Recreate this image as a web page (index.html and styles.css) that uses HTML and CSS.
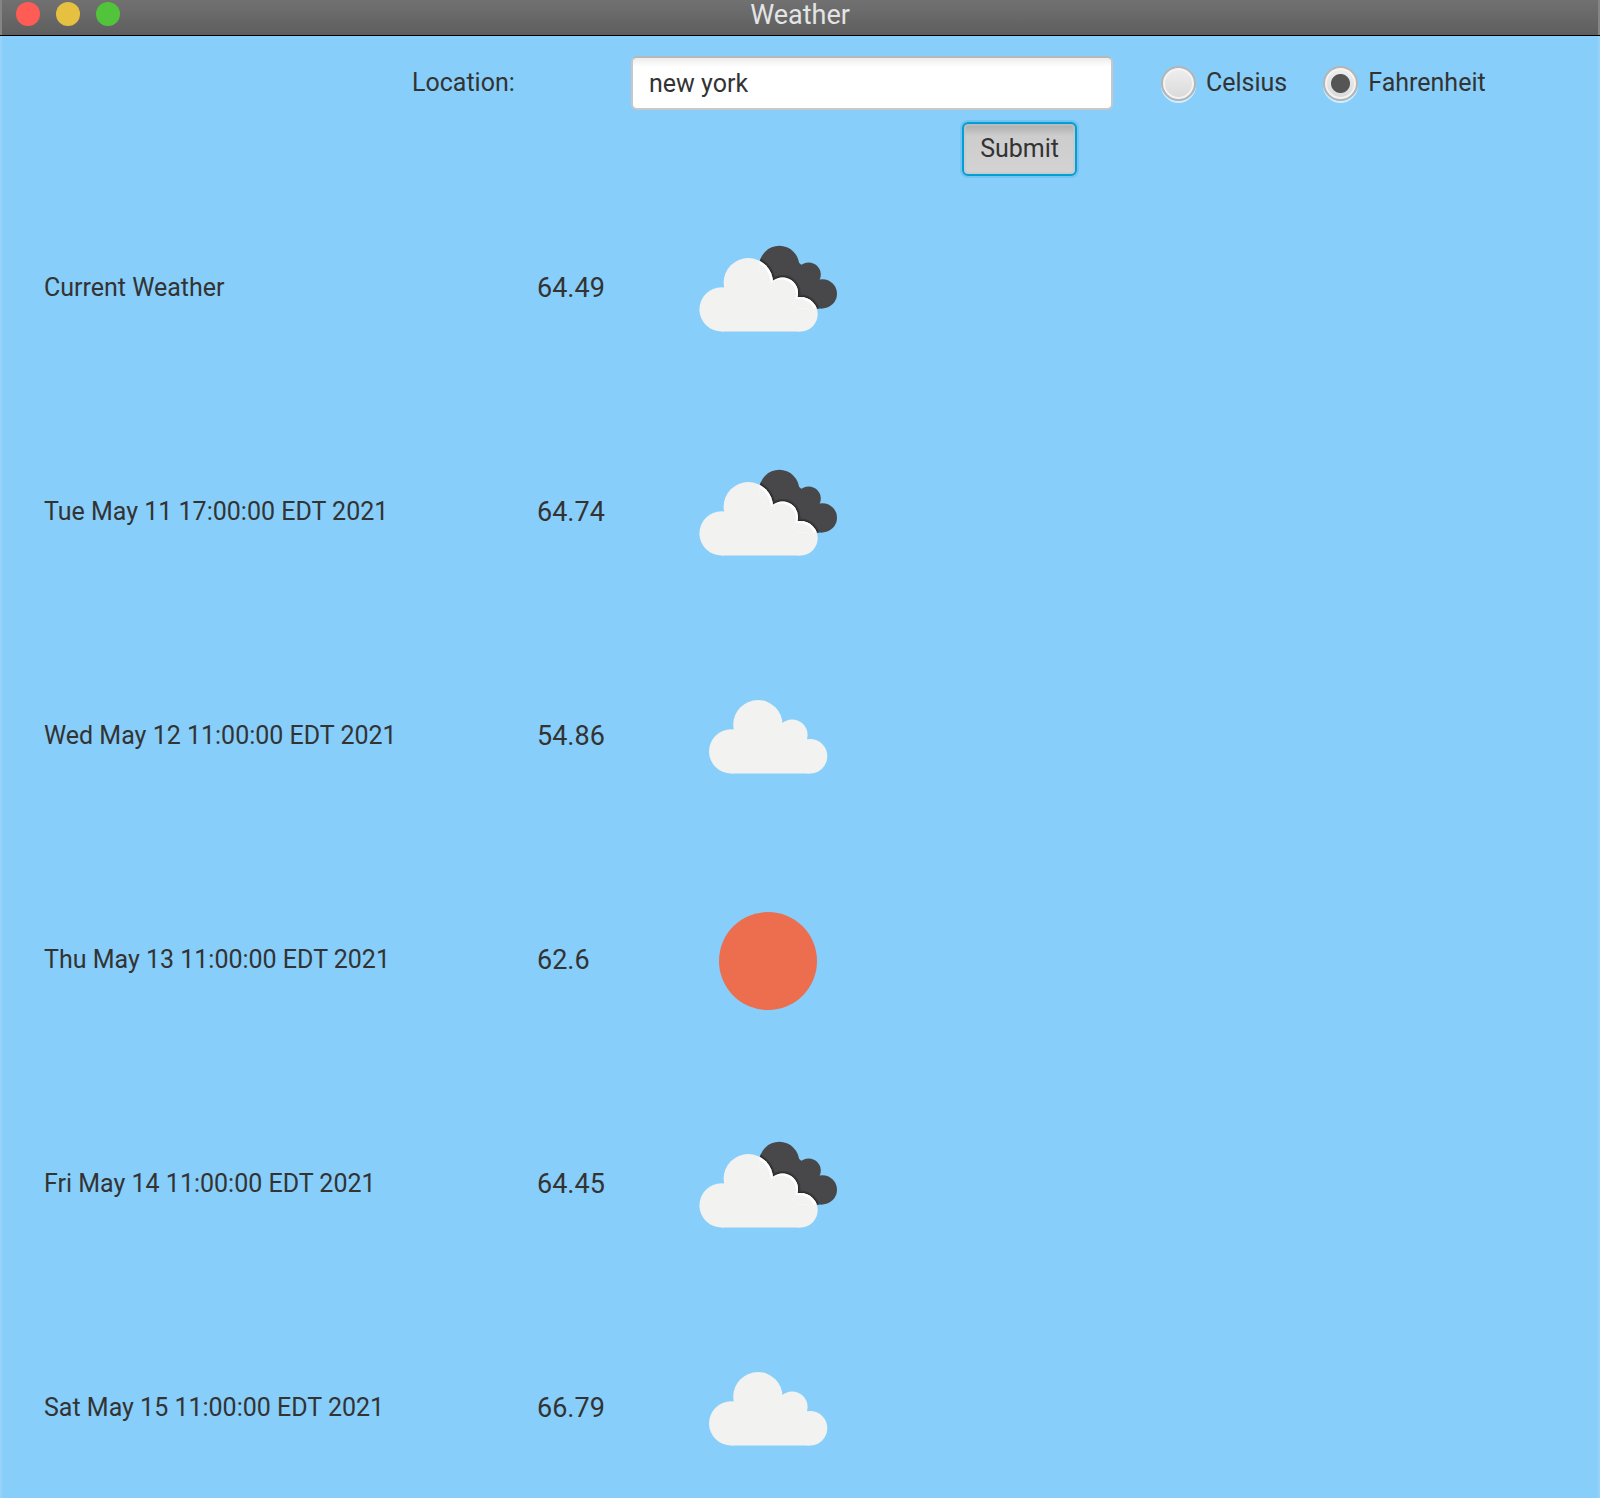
FILE: index.html
```html
<!DOCTYPE html>
<html lang="en">
<head>
<meta charset="utf-8">
<title>Weather</title>
<link rel="stylesheet" href="styles.css">
</head>
<body>
<svg class="symbols" aria-hidden="true">
  <defs>
    <g id="cloud-shape">
      <circle cx="53.5" cy="121.4" r="22.1"/>
      <circle cx="80.3" cy="94.7" r="24.7"/>
      <circle cx="114.6" cy="105" r="15.4"/>
      <circle cx="132.4" cy="126.2" r="17.3"/>
      <path d="M53.5 143.5V110L70 100H115L128 118L132.4 143.5Z"/>
    </g>
    <g id="dark-shape">
      <circle cx="111.3" cy="77.8" r="20"/>
      <circle cx="140.6" cy="86.6" r="12.2"/>
      <circle cx="154.4" cy="105.8" r="14.6"/>
      <path d="M100 90L128 72L150 92L154.4 120.4H130Z"/>
    </g>
    <clipPath id="dark-clip">
      <circle cx="111.3" cy="77.8" r="20"/>
      <circle cx="140.6" cy="86.6" r="12.2"/>
      <circle cx="154.4" cy="105.8" r="14.6"/>
      <path d="M100 90L128 72L150 92L154.4 120.4H130Z"/>
    </clipPath>
    <symbol id="cloud" viewBox="0 0 200 200">
      <use href="#cloud-shape" x="9.6" y="-6" fill="#f2f2f0"/>
    </symbol>
    <symbol id="broken-clouds" viewBox="0 0 200 200">
      <use href="#dark-shape" fill="#48484a"/>
      <g clip-path="url(#dark-clip)">
        <use href="#cloud-shape" fill="#38383a" stroke="#38383a" stroke-width="5"/>
        <use href="#cloud-shape" fill="#2a2a2b" stroke="#2a2a2b" stroke-width="2"/>
      </g>
      <use href="#cloud-shape" fill="#f2f2f0"/>
      <g clip-path="url(#dark-clip)">
        <use href="#cloud-shape" fill="#fff"/>
        <use href="#cloud-shape" x="-2" y="2" fill="#f2f2f0"/>
      </g>
    </symbol>
    <symbol id="sun" viewBox="0 0 200 200">
      <circle cx="100" cy="101" r="49" fill="#ec6e4e"/>
    </symbol>
  </defs>
</svg>

<div class="window">
  <header class="titlebar">
    <div class="lights">
      <button class="light close" type="button" aria-label="Close"></button>
      <button class="light minimize" type="button" aria-label="Minimize"></button>
      <button class="light maximize" type="button" aria-label="Zoom"></button>
    </div>
    <h1 class="title">Weather</h1>
  </header>

  <main class="content">
    <form class="search">
      <label class="location-label" for="location">Location:</label>
      <input class="location" id="location" type="text" value="new york">
      <div class="units">
        <label class="unit"><input class="radio" type="radio" name="unit" value="c">Celsius</label>
        <label class="unit"><input class="radio" type="radio" name="unit" value="f" checked>Fahrenheit</label>
      </div>
      <button class="submit" type="button">Submit</button>
    </form>

    <table class="forecast">
      <tbody>
        <tr><th scope="row">Current Weather</th><td class="temp">64.49</td><td class="sky"><svg class="icon" role="img" aria-label="Broken clouds"><use href="#broken-clouds"/></svg></td></tr>
        <tr><th scope="row">Tue May 11 17:00:00 EDT 2021</th><td class="temp">64.74</td><td class="sky"><svg class="icon" role="img" aria-label="Broken clouds"><use href="#broken-clouds"/></svg></td></tr>
        <tr><th scope="row">Wed May 12 11:00:00 EDT 2021</th><td class="temp">54.86</td><td class="sky"><svg class="icon" role="img" aria-label="Cloudy"><use href="#cloud"/></svg></td></tr>
        <tr><th scope="row">Thu May 13 11:00:00 EDT 2021</th><td class="temp">62.6</td><td class="sky"><svg class="icon" role="img" aria-label="Clear"><use href="#sun"/></svg></td></tr>
        <tr><th scope="row">Fri May 14 11:00:00 EDT 2021</th><td class="temp">64.45</td><td class="sky"><svg class="icon" role="img" aria-label="Broken clouds"><use href="#broken-clouds"/></svg></td></tr>
        <tr><th scope="row">Sat May 15 11:00:00 EDT 2021</th><td class="temp">66.79</td><td class="sky"><svg class="icon" role="img" aria-label="Cloudy"><use href="#cloud"/></svg></td></tr>
      </tbody>
    </table>
  </main>
</div>
</body>
</html>
```
FILE: styles.css
```css
* {
  box-sizing: border-box;
}

body {
  margin: 0;
  color: #333;
  font-family: Roboto, "Liberation Sans", sans-serif;
  font-size: 25px;
  line-height: 32px;
}

.symbols {
  position: absolute;
  width: 0;
  height: 0;
}

.window {
  display: flex;
  flex-direction: column;
  height: 100vh;
  overflow: hidden;
  background: #87cefa;
}

.titlebar {
  display: grid;
  grid-template-columns: 1fr auto 1fr;
  flex: none;
  height: 36px;
  padding: 0 16px;
  background: linear-gradient(#717171, #5e5e5e);
  border-bottom: 1px solid #000;
  box-shadow: inset 2px 0 #858585, inset -2px 0 #858585;
}

.lights {
  display: flex;
  gap: 16px;
  padding-top: 2px;
}

.light {
  width: 24px;
  height: 24px;
  padding: 0;
  border: 0;
  border-radius: 50%;
}

.close {
  background: #ff5c55;
}

.minimize {
  background: #e6c040;
}

.maximize {
  background: #52c43c;
}

.title {
  margin: 0;
  color: #e4e4e4;
  font-size: 27px;
  font-weight: 400;
  line-height: 30px;
}

.content {
  flex: 1;
  min-height: 0;
  border: solid #98d2f8;
  border-width: 0 2px;
}

.search {
  display: grid;
  grid-template-columns: 410fr 219fr 482fr 485fr;
  grid-auto-rows: 54px;
  row-gap: 12px;
  align-items: center;
  padding-top: 20px;
}

.location-label {
  grid-column: 2;
}

.location {
  width: 100%;
  height: 54px;
  padding: 0 16px;
  color: inherit;
  font: inherit;
  background: linear-gradient(#ededed, #fff 9px);
  border: 2px solid #c8c8c8;
  border-top-color: #b8b8b8;
  border-radius: 6px;
  outline: 0;
}

.units {
  display: flex;
  gap: 36px;
  padding-left: 48px;
}

.unit {
  display: flex;
  align-items: center;
  gap: 10px;
}

.radio {
  appearance: none;
  width: 35px;
  height: 35px;
  margin: 0;
  background: linear-gradient(#efefef, #d9d9d9);
  border: 2px solid #b5b5b5;
  border-radius: 50%;
  box-shadow: inset 0 0 0 2px #f4f4f4, 0 2px 0 #d4edfc;
}

.radio:checked {
  background: radial-gradient(circle, #555 9px, transparent 10px), linear-gradient(#efefef, #d9d9d9);
}

.submit {
  grid-column: 3;
  justify-self: end;
  height: 54px;
  margin-right: 36px;
  padding: 0 16px;
  color: inherit;
  font: inherit;
  background: linear-gradient(#ababab, #cdcdcd 12px, #d3d3d3);
  border: 2px solid #039ed3;
  border-radius: 6px;
  box-shadow: 0 0 0 2px #72c3f0, inset 0 0 0 2px #b9c8ce88;
}

.forecast {
  width: 100%;
  border-collapse: collapse;
  table-layout: fixed;
}

.forecast th,
.forecast td {
  padding: 12px 0;
  font-weight: 400;
  text-align: left;
  vertical-align: middle;
}

.forecast th {
  width: 535px;
  padding-left: 42px;
}

.forecast .temp {
  width: 131px;
  font-size: 27px;
}

.icon {
  display: block;
  width: 200px;
  height: 200px;
}
```
